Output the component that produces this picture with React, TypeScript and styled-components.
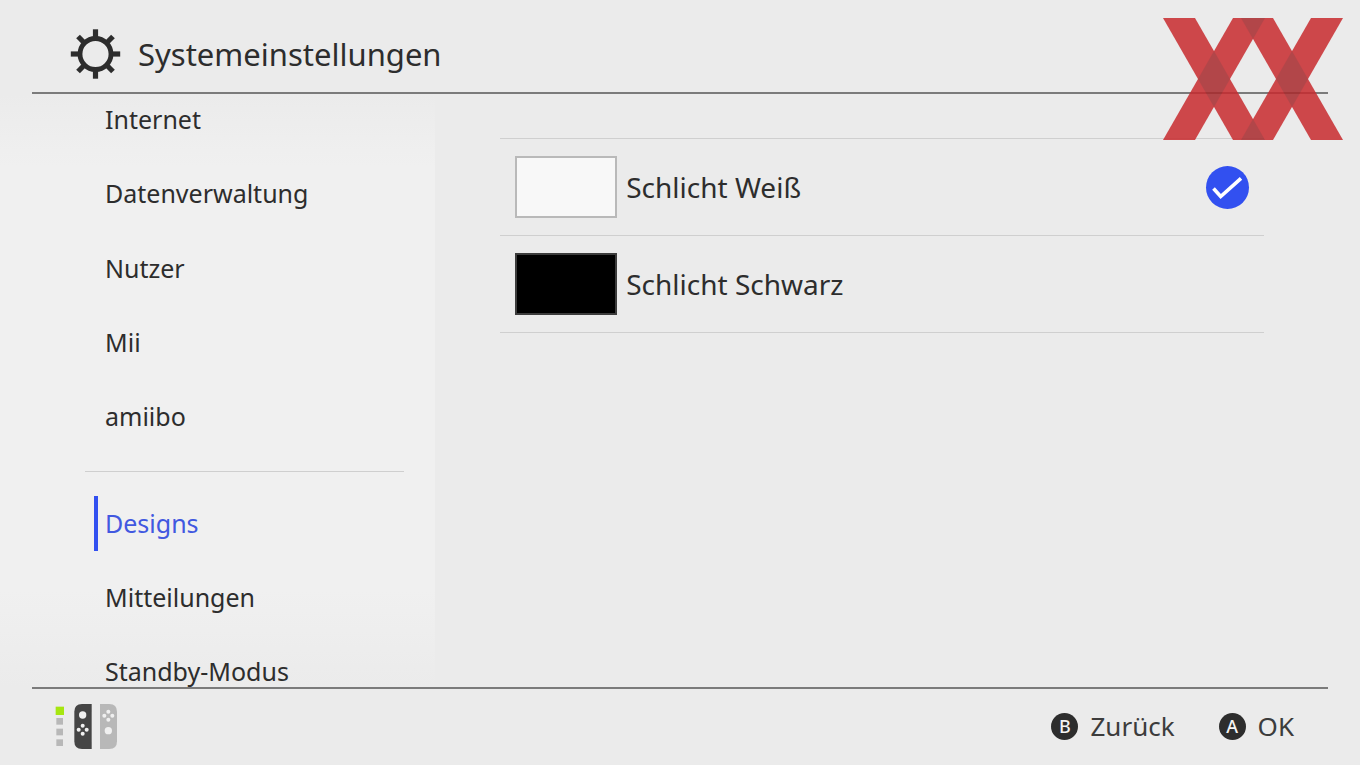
import React, { useState } from "react";
import styled, { createGlobalStyle } from "styled-components";

const GlobalStyle = createGlobalStyle`
  *, *::before, *::after { box-sizing: border-box; }
  body {
    margin: 0;
    background: #ebebeb;
    color: #2d2d2d;
    font-family: "Noto Sans", "Liberation Sans", sans-serif;
  }
`;

const Screen = styled.div`
  display: flex;
  flex-direction: column;
  height: 100vh;
`;

const Header = styled.header`
  display: flex;
  align-items: center;
  gap: 17px;
  height: 94px;
  flex: none;
  margin: 0 32px;
  padding: 16px 38px 0;
  border-bottom: 2px solid #7b7b7b;
`;

const Title = styled.h1`
  margin: 0;
  font-size: 31px;
  font-weight: 400;
  line-height: 40px;
`;

const Main = styled.main`
  display: flex;
  flex: 1;
  min-height: 0;
`;

const Sidebar = styled.nav`
  width: 32%;
  padding: 0 31px 0 85px;
  overflow: hidden;
  background: linear-gradient(#ebebeb, #f0f0f0 72px, #f0f0f0 calc(100% - 96px), #ebebeb);
`;

const MenuGroup = styled.ul<{ $height: number }>`
  display: flex;
  flex-direction: column;
  height: ${(p) => p.$height}px;
  margin: 0;
  padding: 0 0 0 9px;
  list-style: none;

  &:first-child {
    margin-top: -12px;
  }
`;

const MenuItem = styled.li`
  display: flex;
  flex: 1;
  align-items: center;
`;

const MenuLink = styled.a<{ $active: boolean }>`
  flex: 1;
  padding-left: 7px;
  border-left: 4px solid ${(p) => (p.$active ? "#3250f0" : "transparent")};
  color: ${(p) => (p.$active ? "#4158e0" : "inherit")};
  font-size: 25px;
  line-height: 55px;
  text-decoration: none;
`;

const Divider = styled.hr`
  margin: 17px 0 14px;
  border: 0;
  border-top: 1px solid #cfcfcf;
`;

const Content = styled.section`
  flex: 1;
  padding: 44px 96px 0 65px;
`;

const ThemeList = styled.fieldset`
  margin: 0;
  padding: 0;
  border: 0;
  border-top: 1px solid #cfcfcf;
`;

const ThemeRow = styled.label`
  display: flex;
  align-items: center;
  gap: 9px;
  height: 97px;
  padding: 0 15px;
  border-bottom: 1px solid #cfcfcf;
`;

const Swatch = styled.span<{ $fill: string; $edge: string }>`
  width: 102px;
  height: 62px;
  border: 2px solid ${(p) => p.$edge};
  background: ${(p) => p.$fill};
`;

const ThemeName = styled.span`
  flex: 1;
  font-size: 28px;
  line-height: 40px;
`;

const RadioCell = styled.span`
  display: grid;

  > * {
    grid-area: 1 / 1;
  }
`;

const Radio = styled.input`
  appearance: none;
  width: 43px;
  height: 43px;
  margin: 0;
  border-radius: 50%;

  &:checked {
    background: #3250f0;
  }
`;

const Footer = styled.footer`
  display: flex;
  align-items: center;
  justify-content: space-between;
  flex: none;
  height: 78px;
  margin: 0 32px;
  padding: 0 34px 2px 23px;
  border-top: 2px solid #7b7b7b;
`;

const Hints = styled.div`
  display: flex;
  gap: 44px;
`;

const Hint = styled.button`
  display: flex;
  align-items: center;
  gap: 12px;
  padding: 0;
  border: 0;
  background: none;
  color: #3c3c3c;
  font: inherit;
  font-size: 26px;
  line-height: 40px;
`;

const Key = styled.span`
  width: 27px;
  height: 27px;
  border-radius: 50%;
  background: #2d2d2d;
  color: #f4f4f4;
  font-size: 18px;
  font-weight: 500;
  line-height: 27px;
  text-align: center;
`;

const Watermark = styled.svg`
  position: absolute;
  top: 18px;
  right: 17px;
`;

const GearIcon = () => (
  <svg width="51" height="50" viewBox="-25.5 -25 51 50" fill="none" stroke="#2d2d2d" aria-hidden="true">
    <circle r="15.5" strokeWidth="4.8" />
    {[0, 45, 90, 135, 180, 225, 270, 315].map((a) => (
      <path key={a} d="M0-17V-24.7" strokeWidth="5.2" transform={`rotate(${a})`} />
    ))}
  </svg>
);

const ControllerIcon = () => (
  <svg width="63" height="45" viewBox="45 72 189 135" role="img" aria-label="Spieler 1, Joy-Con">
    <rect x="47" y="80" width="25" height="25" fill="#a6e610" />
    <g fill="#b8b8b8">
      <rect x="49" y="114" width="20" height="20" />
      <rect x="49" y="146" width="20" height="20" />
      <rect x="49" y="178" width="20" height="20" />
      <path d="M180 72h28q23 0 23 23v89q0 23-23 23h-28z" />
    </g>
    <path d="M155 72h-29q-23 0-23 23v89q0 23 23 23h29z" fill="#454545" />
    <g fill="#f0f0f0">
      <circle cx="128" cy="105" r="11" />
      <circle cx="128" cy="137" r="6" />
      <circle cx="116" cy="149" r="6" />
      <circle cx="140" cy="149" r="6" />
      <circle cx="128" cy="161" r="6" />
      <circle cx="205" cy="152" r="11" />
      <circle cx="205" cy="95" r="6" />
      <circle cx="193" cy="107" r="6" />
      <circle cx="217" cy="107" r="6" />
      <circle cx="205" cy="119" r="6" />
    </g>
  </svg>
);

const Logo = () => (
  <Watermark width="180" height="122" viewBox="38 39 540 365" preserveAspectRatio="none" role="img" aria-label="XX">
    <g opacity="0.85">
      <g fill="#c82b2f">
        <path d="M38 39h96l210 365h-96z" />
        <path d="M248 39h96L134 404H38z" />
        <path d="M272 39h96l210 365h-96z" />
        <path d="M482 39h96L368 404h-96z" />
      </g>
      <g fill="#a92a2d">
        <path d="M191 138l48 83.500-48 83.500-48-83.500z" />
        <path d="M425 138l48 83.500-48 83.500-48-83.500z" />
        <path d="M272 39h72l-36 62.600z" />
        <path d="M272 404h72l-36-62.600z" />
      </g>
    </g>
  </Watermark>
);

const Check = () => (
  <svg width="43" height="43" viewBox="0 0 43 43" fill="none" stroke="#fff" strokeWidth="3.6" aria-hidden="true">
    <path d="M7.500 22.500L14.700 30.500L35 12.300" />
  </svg>
);

const upperItems = ["Internet", "Datenverwaltung", "Nutzer", "Mii", "amiibo"];
const lowerItems = ["Designs", "Mitteilungen", "Standby-Modus"];

const themes = [
  { name: "Schlicht Weiß", fill: "#f8f8f8", edge: "#b9b9b9" },
  { name: "Schlicht Schwarz", fill: "#000", edge: "#3c3c3c" },
];

export default function App() {
  const [active, setActive] = useState("Designs");
  const [theme, setTheme] = useState("Schlicht Weiß");

  const renderItem = (name: string) => (
    <MenuItem key={name}>
      <MenuLink
        href={`#${name}`}
        $active={name === active}
        aria-current={name === active ? "page" : undefined}
        onClick={() => setActive(name)}
      >
        {name}
      </MenuLink>
    </MenuItem>
  );

  return (
    <Screen>
      <GlobalStyle />
      <Header>
        <GearIcon />
        <Title>Systemeinstellungen</Title>
      </Header>
      <Main>
        <Sidebar>
          <MenuGroup $height={372}>{upperItems.map(renderItem)}</MenuGroup>
          <Divider />
          <MenuGroup $height={223}>{lowerItems.map(renderItem)}</MenuGroup>
        </Sidebar>
        <Content>
          <ThemeList aria-label="Designs">
            {themes.map((t) => (
              <ThemeRow key={t.name}>
                <Swatch $fill={t.fill} $edge={t.edge} />
                <ThemeName>{t.name}</ThemeName>
                <RadioCell>
                  <Radio type="radio" name="theme" checked={theme === t.name} onChange={() => setTheme(t.name)} />
                  {theme === t.name && <Check />}
                </RadioCell>
              </ThemeRow>
            ))}
          </ThemeList>
        </Content>
      </Main>
      <Footer>
        <ControllerIcon />
        <Hints>
          <Hint type="button">
            <Key>B</Key>Zurück
          </Hint>
          <Hint type="button">
            <Key>A</Key>OK
          </Hint>
        </Hints>
      </Footer>
      <Logo />
    </Screen>
  );
}
